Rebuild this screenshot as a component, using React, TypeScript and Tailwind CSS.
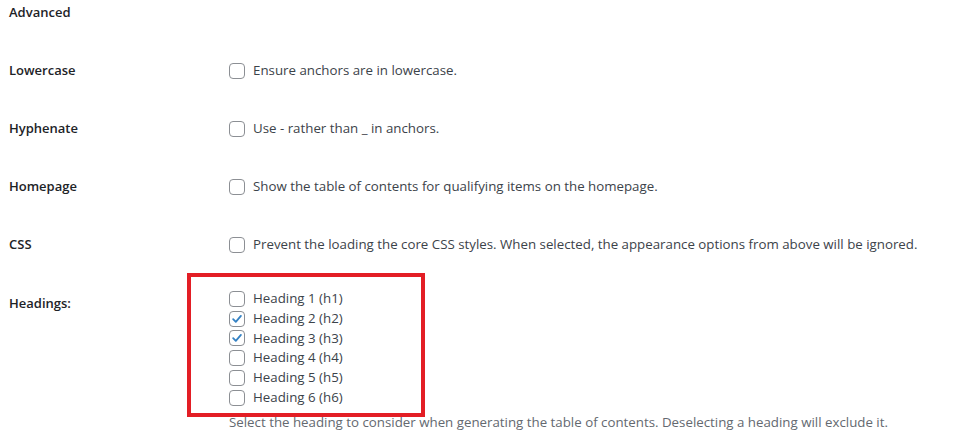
import React from "react";

const font = { fontFamily: '"Open Sans", "Noto Sans", "Liberation Sans", sans-serif' };

function Box({ checked }: { checked?: boolean }) {
  return (
    <span className="flex h-4 w-4 shrink-0 items-center justify-center rounded-[4px] border border-[#8c8f94] bg-white">
      {checked && (
        <svg viewBox="0 0 20 20" className="h-[18px] w-[18px]">
          <path d="M4.5 10.2 L8.3 14 L15.6 5.6" fill="none" stroke="#3582c4" strokeWidth="2.6" strokeLinecap="round" strokeLinejoin="round" />
        </svg>
      )}
    </span>
  );
}

const options = [
  { label: "Lowercase", text: "Ensure anchors are in lowercase." },
  { label: "Hyphenate", text: "Use - rather than _ in anchors." },
  { label: "Homepage", text: "Show the table of contents for qualifying items on the homepage." },
  { label: "CSS", text: "Prevent the loading the core CSS styles. When selected, the appearance options from above will be ignored." },
];

const headings = [1, 2, 3, 4, 5, 6];

export default function App() {
  return (
    <div className="h-[441px] w-[953px] overflow-hidden bg-white text-[13.3px] text-[#3c434a]" style={font}>
      <div className="flex h-[25px] items-center pl-[9px] text-[13px] font-semibold text-[#1d2327]">Advanced</div>
      <div className="h-[17px]" />

      {options.map((o) => (
        <div key={o.label} className="flex h-[58px] items-center">
          <div className="w-[229px] pl-[9px] text-[13px] font-semibold text-[#1d2327]">{o.label}</div>
          <label className="flex items-center gap-2">
            <Box />
            <span>{o.text}</span>
          </label>
        </div>
      ))}

      <div className="flex pt-[15px]">
        <div className="w-[229px] pl-[9px] pt-[4px] text-[13px] font-semibold leading-5 text-[#1d2327]">Headings:</div>
        <div className="relative">
          <div className="pointer-events-none absolute left-[-42px] top-[-16px] h-[144px] w-[238px] border-4 border-[#e31e25]" />
          {headings.map((n) => (
            <label key={n} className="flex h-[19.8px] items-center gap-2">
              <Box checked={n === 2 || n === 3} />
              <span>
                Heading {n} (h{n})
              </span>
            </label>
          ))}
          <p className="mt-[4px] leading-5 text-[#646970]">
            Select the heading to consider when generating the table of contents. Deselecting a heading will exclude it.
          </p>
        </div>
      </div>
    </div>
  );
}
